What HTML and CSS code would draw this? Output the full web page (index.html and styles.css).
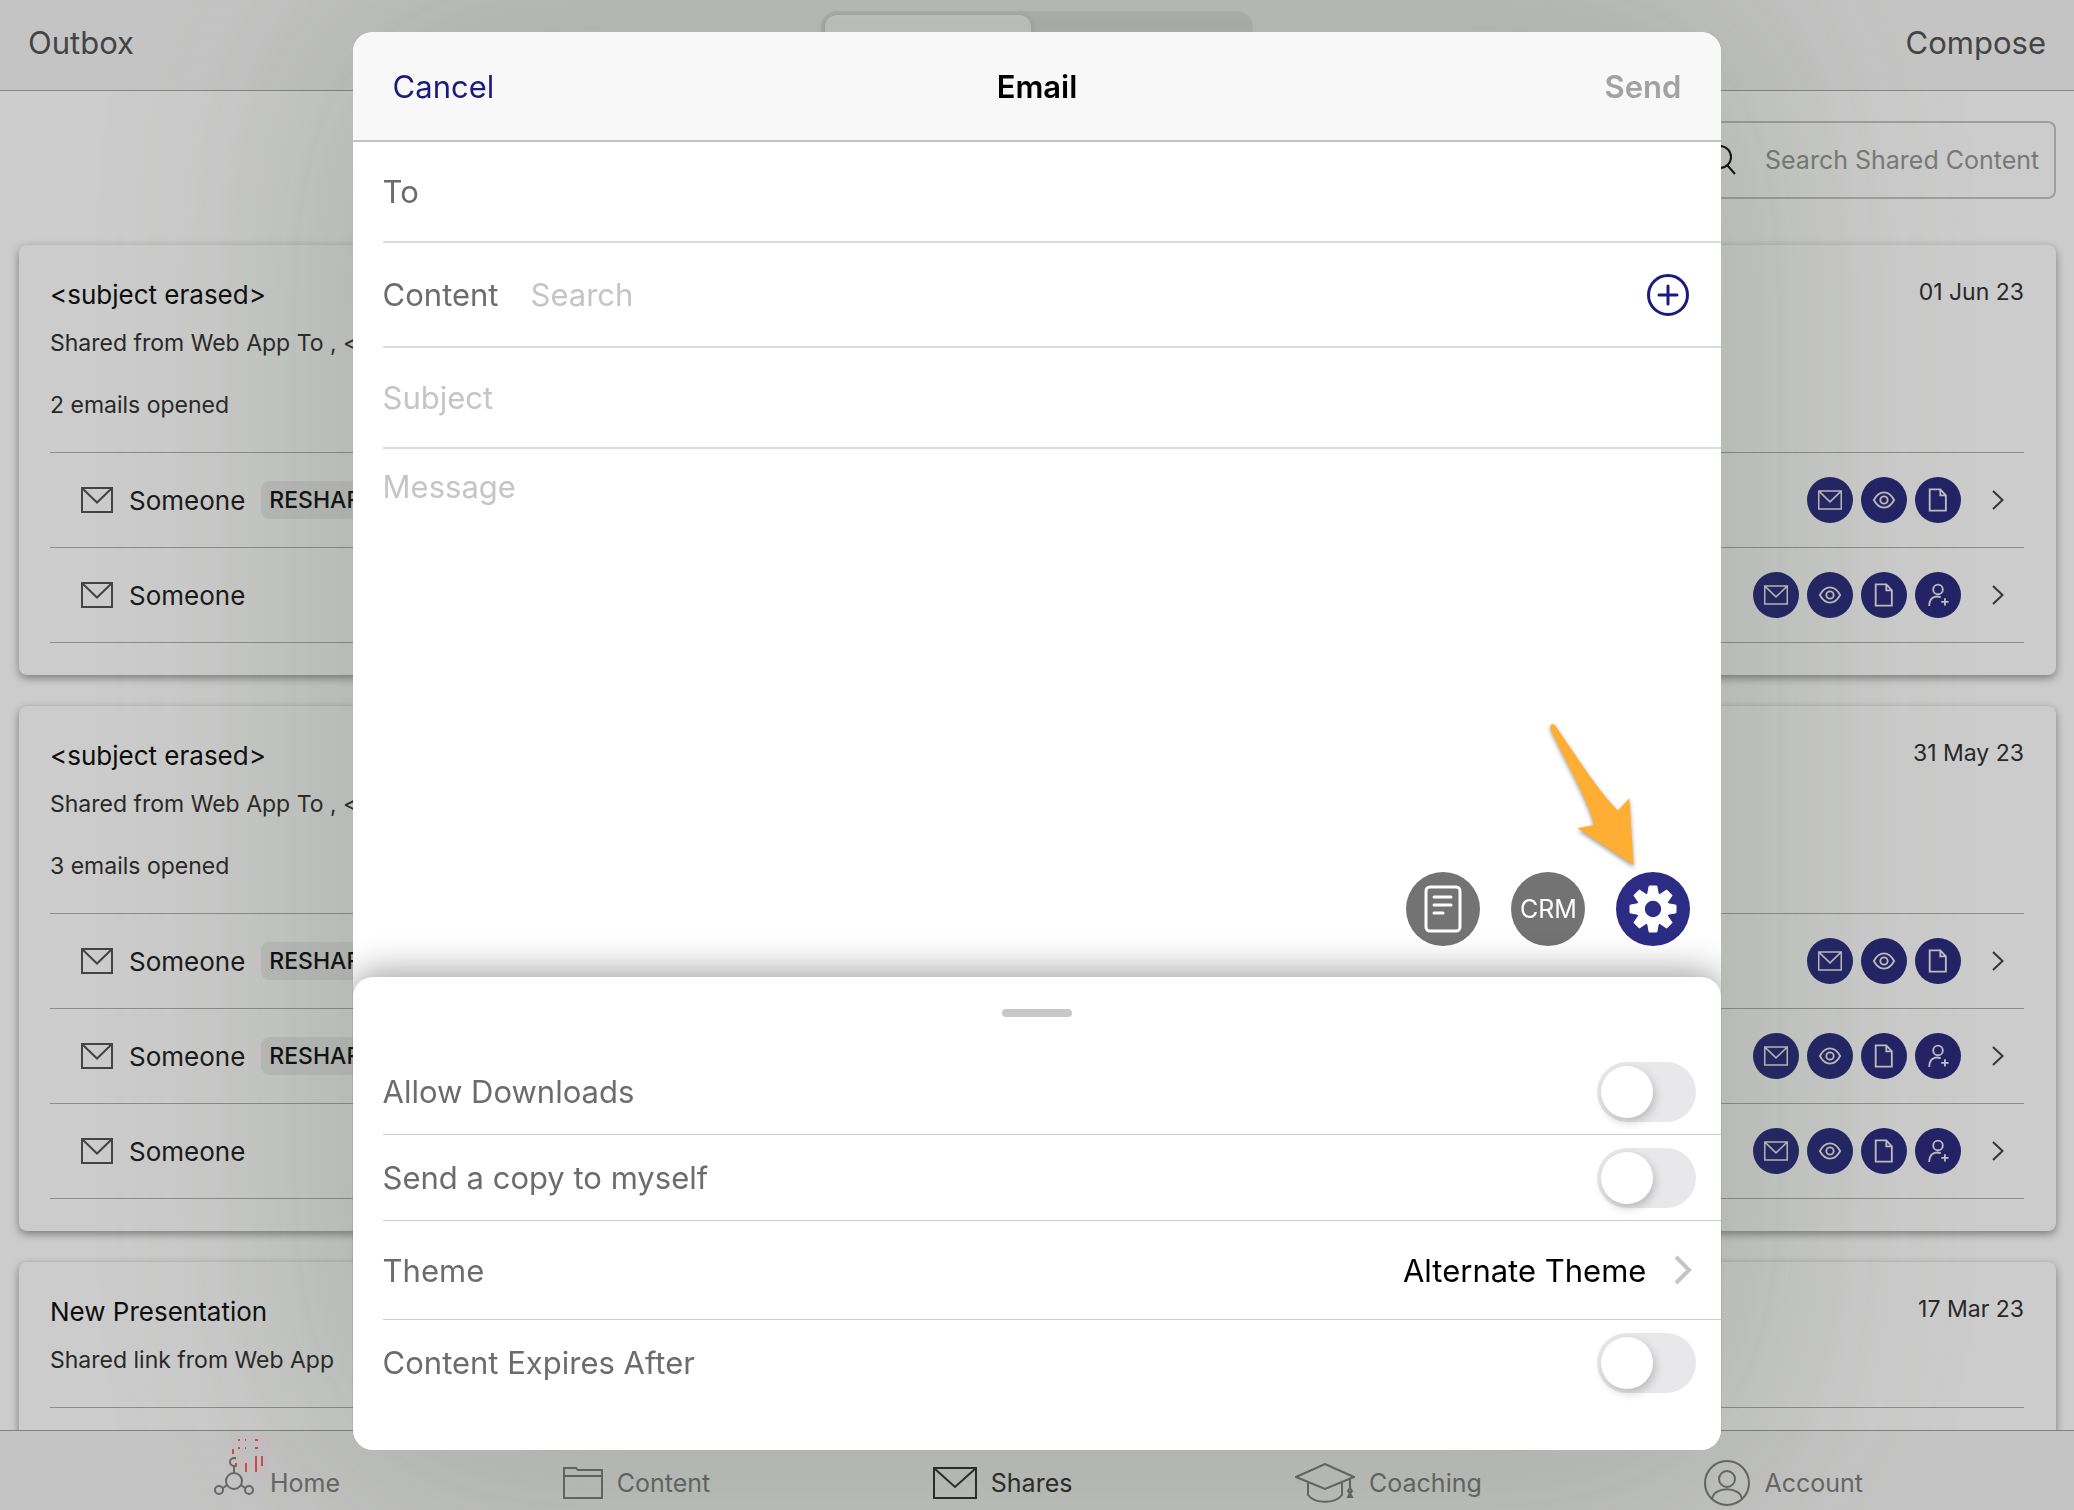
FILE: index.html
```html
<!DOCTYPE html>
<html lang="en">
<head>
  <meta charset="UTF-8">
  <meta name="viewport" content="width=device-width, initial-scale=1.0">
  <title>Shares - Email</title>
  <link rel="stylesheet" href="styles.css">
</head>
<body>
  <!-- Shared icons -->
  <svg class="icon-defs" aria-hidden="true">
    <symbol id="mail" viewBox="0 0 32 26">
      <path d="M1 1h30v24H1zM1.500 1.500 16 15.500 30.500 1.500"/>
    </symbol>
    <symbol id="eye" viewBox="0 0 26 26">
      <path d="M2 13c6-11 16-11 22 0c-6 11-16 11-22 0z"/>
      <circle cx="13" cy="13" r="4"/>
    </symbol>
    <symbol id="page" viewBox="0 0 26 26">
      <path d="M4 1.500h11.500l6 6.500v16.500H4zM15.500 1.500V8h6"/>
    </symbol>
    <symbol id="person" viewBox="0 0 26 26">
      <circle cx="13" cy="7" r="5.200"/>
      <path d="M3.500 25c0-8 5-12 12.500-9.800M20.500 16.500v8M16.500 20.500h8"/>
    </symbol>
    <symbol id="chevron" viewBox="0 0 12 20">
      <path d="M1 1l9.500 9L1 19"/>
    </symbol>
  </svg>

  <div class="app">
    <header class="navbar">
      <button class="nav-btn">Outbox</button>
      <div class="segments">
        <button class="segment active" aria-label="First list"></button>
        <button class="segment" aria-label="Second list"></button>
      </div>
      <button class="nav-btn">Compose</button>
    </header>

    <main class="feed">
      <label class="search-box">
        <svg class="search-icon" viewBox="0 0 28 30"><circle cx="12" cy="12" r="11"/><path d="M19.500 20.500 27 29"/></svg>
        <input class="search-input" type="text" placeholder="Search Shared Content" aria-label="Search Shared Content">
      </label>

      <article class="card">
        <div class="card-head">
          <h2 class="card-title">&lt;subject erased&gt;</h2>
          <time class="card-date">01 Jun 23</time>
        </div>
        <p class="card-from">Shared from Web App To , &lt;email erased&gt;</p>
        <p class="card-opened">2 emails opened</p>
        <ul class="people">
          <li class="person">
            <svg class="person-icon"><use href="#mail"/></svg>
            <span class="person-name">Someone</span>
            <span class="tag">RESHARED</span>
            <div class="events">
              <span class="event"><svg><use href="#mail"/></svg></span>
              <span class="event"><svg><use href="#eye"/></svg></span>
              <span class="event"><svg><use href="#page"/></svg></span>
            </div>
            <svg class="more"><use href="#chevron"/></svg>
          </li>
          <li class="person">
            <svg class="person-icon"><use href="#mail"/></svg>
            <span class="person-name">Someone</span>
            <div class="events">
              <span class="event"><svg><use href="#mail"/></svg></span>
              <span class="event"><svg><use href="#eye"/></svg></span>
              <span class="event"><svg><use href="#page"/></svg></span>
              <span class="event"><svg><use href="#person"/></svg></span>
            </div>
            <svg class="more"><use href="#chevron"/></svg>
          </li>
        </ul>
      </article>

      <article class="card">
        <div class="card-head">
          <h2 class="card-title">&lt;subject erased&gt;</h2>
          <time class="card-date">31 May 23</time>
        </div>
        <p class="card-from">Shared from Web App To , &lt;email erased&gt;</p>
        <p class="card-opened">3 emails opened</p>
        <ul class="people">
          <li class="person">
            <svg class="person-icon"><use href="#mail"/></svg>
            <span class="person-name">Someone</span>
            <span class="tag">RESHARED</span>
            <div class="events">
              <span class="event"><svg><use href="#mail"/></svg></span>
              <span class="event"><svg><use href="#eye"/></svg></span>
              <span class="event"><svg><use href="#page"/></svg></span>
            </div>
            <svg class="more"><use href="#chevron"/></svg>
          </li>
          <li class="person">
            <svg class="person-icon"><use href="#mail"/></svg>
            <span class="person-name">Someone</span>
            <span class="tag">RESHARED</span>
            <div class="events">
              <span class="event"><svg><use href="#mail"/></svg></span>
              <span class="event"><svg><use href="#eye"/></svg></span>
              <span class="event"><svg><use href="#page"/></svg></span>
              <span class="event"><svg><use href="#person"/></svg></span>
            </div>
            <svg class="more"><use href="#chevron"/></svg>
          </li>
          <li class="person">
            <svg class="person-icon"><use href="#mail"/></svg>
            <span class="person-name">Someone</span>
            <div class="events">
              <span class="event"><svg><use href="#mail"/></svg></span>
              <span class="event"><svg><use href="#eye"/></svg></span>
              <span class="event"><svg><use href="#page"/></svg></span>
              <span class="event"><svg><use href="#person"/></svg></span>
            </div>
            <svg class="more"><use href="#chevron"/></svg>
          </li>
        </ul>
      </article>

      <article class="card">
        <div class="card-head">
          <h2 class="card-title">New Presentation</h2>
          <time class="card-date">17 Mar 23</time>
        </div>
        <p class="card-from">Shared link from Web App</p>
        <ul class="people">
          <li class="person"></li>
        </ul>
      </article>
    </main>

    <nav class="tabbar">
      <a class="tab" href="#home">
        <svg class="tab-home" viewBox="0 0 70 64">
          <circle cx="20" cy="46" r="8"/><circle cx="5" cy="55" r="4"/><circle cx="35" cy="55" r="4"/><circle cx="20" cy="27" r="4"/>
          <path d="M20 31v7M13 50l-4 3M27 50l4 3"/>
          <path class="smudge" d="M17 0h49v11H55v35H43V34H22V18H17z"/>
          <path class="marks" d="M24 5h2M31 5h1M41 5h3M24 13h2M31 13h1M41 13h3M19 14v5M22 28v4M32 28v9M42 21v16M48 21v10"/>
        </svg>
        Home
      </a>
      <a class="tab" href="#content">
        <svg class="tab-folder" viewBox="0 0 40 32"><path d="M1 31V1h12l2 2h24v28zM1 9h38"/></svg>
        Content
      </a>
      <a class="tab current" href="#shares">
        <svg class="tab-mail" viewBox="0 0 44 32"><path d="M1 1h42v30H1zM2 2l20 18L42 2"/></svg>
        Shares
      </a>
      <a class="tab" href="#coaching">
        <svg class="tab-cap" viewBox="0 0 60 40"><path d="M1 14 30 1l29 13-29 12zM13 20v12c7 9 27 9 34 0V20M55 16v9M55 25l-2 3 2 2 2-2zM55 30l-2 4h4z"/></svg>
        Coaching
      </a>
      <a class="tab" href="#account">
        <svg class="tab-user" viewBox="0 0 46 46"><circle cx="23" cy="23" r="22"/><ellipse cx="23" cy="19" rx="8" ry="8"/><path d="M8 39c2-13 28-13 30 0"/></svg>
        Account
      </a>
    </nav>
  </div>

  <div class="overlay">
    <form class="modal" role="dialog" aria-label="Email">
      <div class="modal-header">
        <button class="cancel" type="button">Cancel</button>
        <h1 class="modal-title">Email</h1>
        <button class="send" type="button">Send</button>
      </div>

      <div class="field">
        <label for="to">To</label>
        <input id="to" type="text">
      </div>
      <div class="field field-content">
        <label for="content">Content</label>
        <input id="content" type="text" placeholder="Search">
        <button class="add" type="button" aria-label="Add content">
          <svg viewBox="0 0 42 42"><circle cx="21" cy="21" r="19.500"/><path d="M21 12v18M12 21h18"/></svg>
        </button>
      </div>
      <div class="field">
        <input type="text" placeholder="Subject" aria-label="Subject">
      </div>
      <textarea class="message" placeholder="Message" aria-label="Message"></textarea>

      <div class="tools">
        <button class="tool" type="button" aria-label="Templates">
          <svg class="note" viewBox="0 0 38 48"><rect x="2" y="2" width="34" height="44" rx="4"/><path d="M10 12h17M10 20h17M10 28h9"/></svg>
        </button>
        <button class="tool" type="button">CRM</button>
        <div class="tool-wrap">
          <button class="tool tool-active" type="button" aria-label="Settings">
            <svg class="gear" viewBox="-24 -24 48 48">
              <defs><path id="tooth" d="M-5.500 -14 -3.800 -23h7.600L5.500 -14z"/></defs>
              <circle r="12.200"/>
              <use href="#tooth"/>
              <use href="#tooth" transform="rotate(45)"/>
              <use href="#tooth" transform="rotate(90)"/>
              <use href="#tooth" transform="rotate(135)"/>
              <use href="#tooth" transform="rotate(180)"/>
              <use href="#tooth" transform="rotate(225)"/>
              <use href="#tooth" transform="rotate(270)"/>
              <use href="#tooth" transform="rotate(315)"/>
            </svg>
          </button>
          <svg class="arrow" viewBox="499 60 282 450">
            <path d="M512 86C509 76 518 67 527 77C590 167 652 268 715 332L749 295L762 496L594 385L643 375C630 310 560 190 512 86z"/>
          </svg>
        </div>
      </div>

      <div class="sheet">
        <div class="handle"></div>
        <label class="option">
          Allow Downloads
          <input class="switch" type="checkbox">
        </label>
        <label class="option">
          Send a copy to myself
          <input class="switch" type="checkbox">
        </label>
        <button class="option option-theme" type="button">
          Theme
          <span class="theme-value">Alternate Theme</span>
          <svg class="theme-arrow" viewBox="0 0 18 30"><path d="M2 2l13 13L2 28"/></svg>
        </button>
        <label class="option">
          Content Expires After
          <input class="switch" type="checkbox">
        </label>
      </div>
    </form>
  </div>
</body>
</html>
```
FILE: styles.css
```css
* {
  margin: 0;
  padding: 0;
  box-sizing: border-box;
}

body {
  font-family: Inter, 'Liberation Sans', sans-serif;
  background: #fff;
  color: #111;
  overflow: hidden;
}

button,
input,
textarea {
  font: inherit;
  color: inherit;
  background: none;
  border: none;
  outline: none;
}

button {
  cursor: pointer;
}

svg {
  fill: none;
  stroke: currentColor;
  stroke-width: 2;
  flex: none;
}

.icon-defs {
  position: absolute;
  width: 0;
  height: 0;
}

.app {
  height: 100vh;
  display: flex;
  flex-direction: column;
}

/* Top bar */
.navbar {
  height: 91px;
  flex: none;
  display: flex;
  justify-content: space-between;
  padding: 0 28px;
  background: #f6f6f6;
  border-bottom: 1px solid #a8a8a8;
}

.nav-btn {
  width: 160px;
  height: 84px;
  font-size: 31px;
  color: #555;
  text-align: left;
}

.nav-btn:last-child {
  text-align: right;
}

.segments {
  width: 432px;
  height: 64px;
  margin-top: 11px;
  padding: 4px;
  display: grid;
  grid-template-columns: 206px 1fr;
  border-radius: 16px;
  background: #e6e6e6;
}

.segment {
  border-radius: 12px;
}

.segment.active {
  background: #fff;
  box-shadow: 0 2px 8px rgba(0, 0, 0, 0.15);
}

/* Shares list */
.feed {
  flex: 1;
  min-height: 0;
  overflow: hidden;
  padding: 30px 18px 0 19px;
  display: flex;
  flex-direction: column;
}

.search-box {
  flex: none;
  align-self: flex-end;
  width: 364px;
  height: 78px;
  margin-bottom: 46px;
  padding: 0 0 0 14px;
  display: flex;
  align-items: center;
  gap: 29px;
  border: 2px solid #c6c6c6;
  border-radius: 8px;
}

.search-icon {
  width: 28px;
  height: 30px;
}

.search-input {
  flex: 1;
  min-width: 0;
  font-size: 25px;
}

.search-input::placeholder {
  color: #989898;
}

.card {
  flex: none;
  margin-bottom: 31px;
  padding: 34px 32px 32px 31px;
  border-radius: 8px;
  background: #fff;
  box-shadow: 0 3px 8px rgba(0, 0, 0, 0.4);
}

.card-head {
  display: flex;
  justify-content: space-between;
  line-height: 32px;
}

.card-title {
  font-size: 26px;
  font-weight: 400;
}

.card-date {
  font-size: 23px;
  line-height: 26px;
  color: #333;
}

.card-from,
.card-opened {
  font-size: 23px;
  line-height: 28px;
  color: #333;
}

.card-from {
  margin-top: 18px;
}

.card-opened {
  margin-top: 34px;
}

.people {
  margin-top: 33px;
  list-style: none;
  border-top: 1px solid #b0b0b0;
}

.person {
  height: 95px;
  padding: 0 20px 0 31px;
  display: flex;
  align-items: center;
  border-bottom: 1px solid #b0b0b0;
}

.person-icon {
  width: 32px;
  height: 26px;
  color: #555;
}

.person-name {
  margin-left: 16px;
  font-size: 26px;
  color: #222;
}

.tag {
  margin-left: 16px;
  padding: 0 8px;
  border-radius: 8px;
  background: #eee;
  font-size: 23px;
  font-weight: 500;
  line-height: 38px;
}

.events {
  margin-left: auto;
  display: flex;
  gap: 8px;
}

.event {
  width: 46px;
  height: 46px;
  display: flex;
  align-items: center;
  justify-content: center;
  border-radius: 50%;
  background: #2c2c80;
  color: #eee;
}

.event svg {
  width: 24px;
  height: 24px;
}

.more {
  width: 12px;
  height: 20px;
  margin-left: 31px;
  color: #444;
}

/* Bottom tabs */
.tabbar {
  height: 80px;
  flex: none;
  padding: 0 211px 0 214px;
  display: flex;
  align-items: center;
  justify-content: space-between;
  background: #f6f6f6;
  border-top: 1px solid #a0a0a0;
}

.tab {
  display: flex;
  align-items: center;
  gap: 14px;
  margin-top: 24px;
  font-size: 25px;
  line-height: 32px;
  color: #808080;
  text-decoration: none;
}

.tab.current {
  color: #333;
}

.tab-home {
  width: 70px;
  height: 64px;
  margin: -32px -28px 0 0;
}

.smudge {
  fill: #faf3f8;
  stroke: none;
}

.marks {
  stroke: #ff6258;
}

.tab-folder {
  width: 40px;
  height: 32px;
}

.tab-mail {
  width: 44px;
  height: 32px;
}

.tab-cap {
  width: 60px;
  height: 40px;
}

.tab-user {
  width: 46px;
  height: 46px;
  margin: -7px 0;
}

/* Email dialog */
.overlay {
  position: fixed;
  inset: 0;
  padding: 32px 0 60px;
  display: flex;
  justify-content: center;
  background: rgba(0, 0, 0, 0.2);
}

.modal {
  width: 66%;
  display: flex;
  flex-direction: column;
  border-radius: 20px;
  background: #fff;
  font-size: 31px;
  color: #6c6c6c;
  box-shadow: 0 0 260px 30px rgba(60, 80, 50, 0.24);
}

.modal-header {
  height: 110px;
  flex: none;
  padding: 0 40px;
  display: grid;
  grid-template-columns: 1fr auto 1fr;
  align-items: center;
  border-bottom: 2px solid #c2c2c2;
  border-radius: 20px 20px 0 0;
  background: #f8f8f8;
}

.modal-title {
  font-size: 31px;
  font-weight: 600;
  color: #000;
}

.cancel {
  justify-self: start;
  color: #1b1b7d;
}

.send {
  justify-self: end;
  font-weight: 600;
  color: #a2a2a2;
}

.field {
  height: 101px;
  flex: none;
  margin-left: 30px;
  padding-right: 32px;
  display: flex;
  align-items: center;
  gap: 32px;
  border-bottom: 2px solid #dcdcdc;
}

.field-content {
  height: 105px;
}

.field input {
  flex: 1;
  min-width: 0;
}

.modal ::placeholder {
  color: #c5c5c7;
}

.add {
  width: 42px;
  height: 42px;
  color: #1b1b7d;
}

.add svg {
  display: block;
  stroke-width: 3;
  stroke-linecap: round;
}

.message {
  flex: 1;
  min-height: 80px;
  margin-left: 30px;
  padding-top: 18px;
  line-height: 40px;
  resize: none;
}

.tools {
  flex: none;
  padding: 0 31px 31px;
  display: flex;
  justify-content: flex-end;
  gap: 31px;
}

.tool-wrap {
  position: relative;
}

.tool {
  width: 74px;
  height: 74px;
  display: flex;
  align-items: center;
  justify-content: center;
  border-radius: 50%;
  background: #737373;
  color: #fff;
  font-size: 25px;
}

.tool-active {
  background: #2c2c85;
}

.note {
  width: 38px;
  height: 48px;
  stroke-width: 3;
  stroke-linecap: round;
}

.gear {
  width: 48px;
  height: 48px;
}

.gear circle {
  stroke-width: 8;
}

.gear use {
  fill: #fff;
  stroke-linejoin: round;
  stroke-width: 1;
}

.arrow {
  position: absolute;
  right: 50px;
  bottom: 76px;
  width: 94px;
  height: 150px;
  fill: #ffae34;
  stroke: none;
  filter: drop-shadow(0 2px 2px rgba(0, 0, 0, 0.4));
}

/* Settings sheet */
.sheet {
  flex: none;
  padding: 32px 0 45px 30px;
  border-radius: 20px;
  background: #fff;
  box-shadow: 0 -4px 36px rgba(0, 0, 0, 0.4);
  clip-path: inset(-60px 0 0 0 round 0 0 20px 20px);
}

.handle {
  width: 70px;
  height: 8px;
  margin: 0 auto 32px;
  border-radius: 4px;
  background: #c8c8c8;
  transform: translateX(-15px);
}

.option {
  width: 100%;
  height: 86px;
  padding-right: 25px;
  display: flex;
  align-items: center;
  justify-content: space-between;
  border-bottom: 1px solid #ccc;
}

.option:last-child {
  height: 85px;
  border-bottom: none;
}

.option-theme {
  height: 99px;
}

.theme-value {
  margin-left: auto;
  color: #000;
}

.theme-arrow {
  width: 18px;
  height: 30px;
  margin: 0 4px 0 28px;
  color: #c4c4c6;
  stroke-width: 4;
}

.switch {
  appearance: none;
  width: 99px;
  height: 60px;
  padding: 4px;
  border-radius: 30px;
  background: #e8e8ea;
  cursor: pointer;
}

.switch::before {
  content: '';
  display: block;
  width: 52px;
  height: 52px;
  border-radius: 50%;
  background: #fff;
  box-shadow: 2px 4px 10px rgba(0, 0, 0, 0.2);
}

.switch:checked {
  background: #2c2c85;
}

.switch:checked::before {
  margin-left: auto;
}
```
